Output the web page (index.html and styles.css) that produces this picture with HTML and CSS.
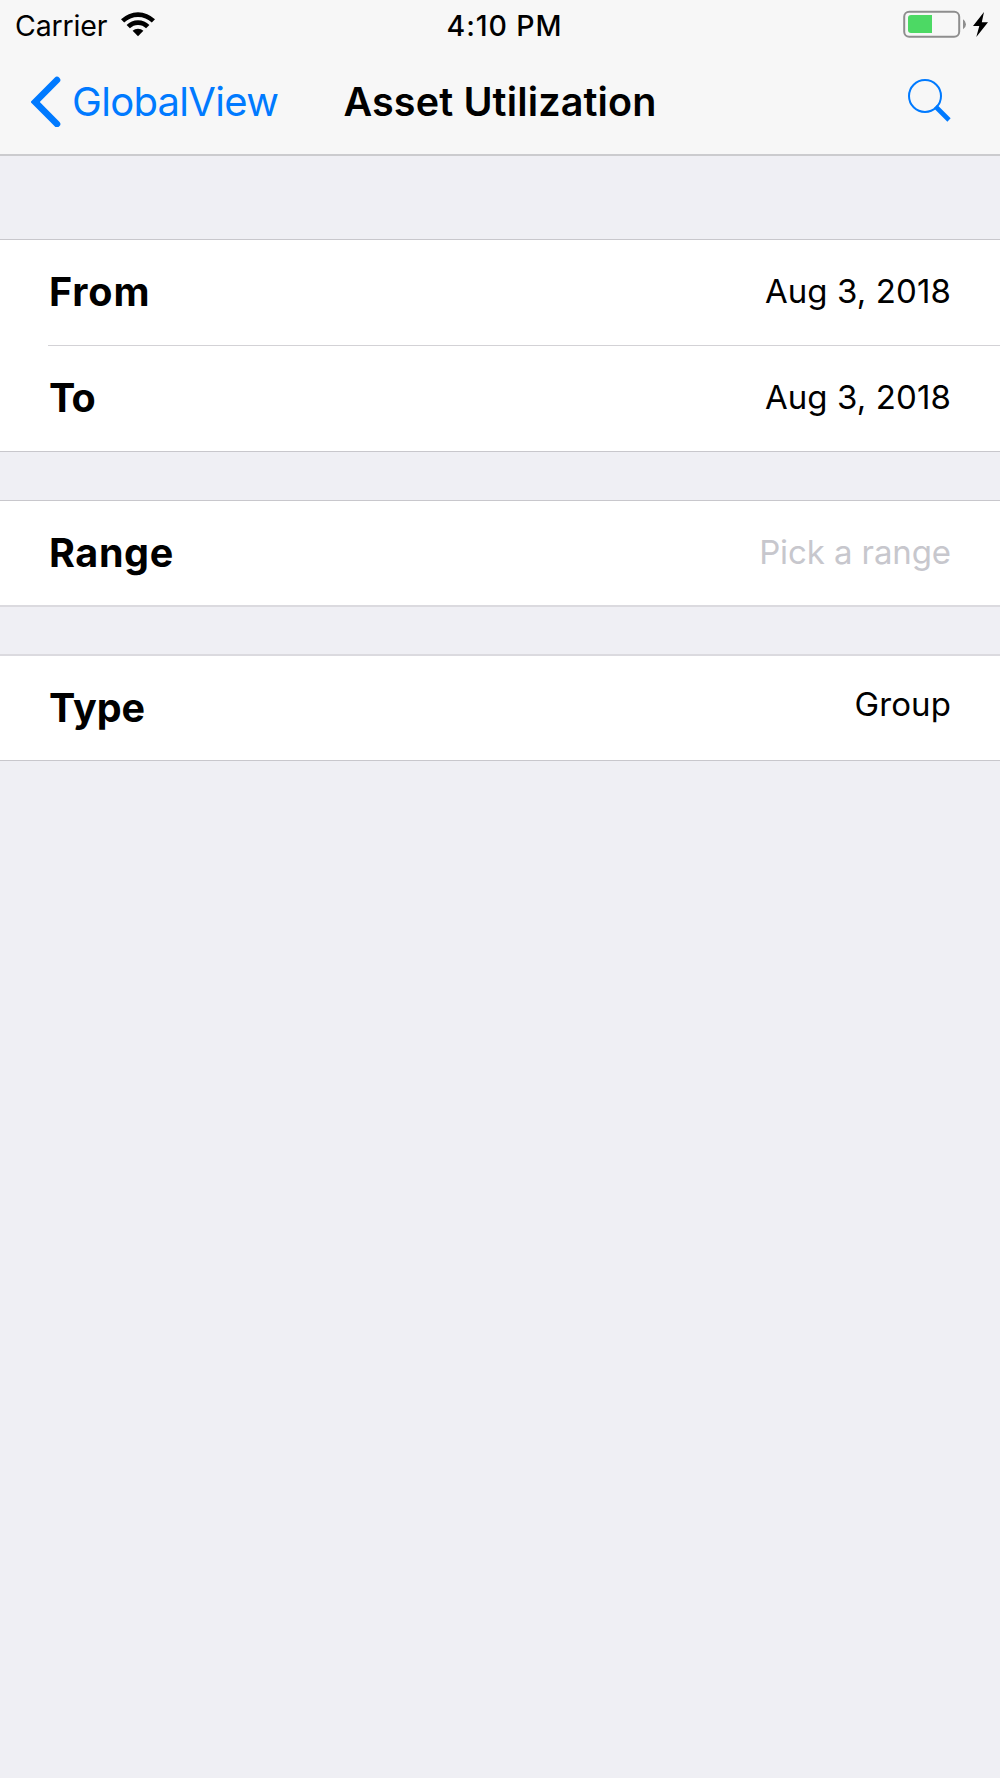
FILE: index.html
```html
<!DOCTYPE html>
<html lang="en">
<head>
  <meta charset="UTF-8" />
  <meta name="viewport" content="width=device-width, initial-scale=1.0"/>
  <title>Asset Utilization</title>
  <link rel="stylesheet" href="styles.css">
</head>
<body>
  <header class="top-bar">
    <div class="status-bar">
      <div class="status-left">
        <span class="carrier">Carrier</span>
        <svg class="wifi-icon" width="34" height="25" viewBox="0 0 34 25">
          <path d="M0 7.3 A24.2 24.2 0 0 1 34 7.3 L30.8 10.6 A19.6 19.6 0 0 0 3.2 10.6 Z"/>
          <path d="M5.6 13 A16.2 16.2 0 0 1 28.4 13 L25.1 16.3 A11.5 11.5 0 0 0 8.9 16.3 Z"/>
          <path d="M11.6 18.8 A7.8 7.8 0 0 1 22.4 18.8 L17 24.3 Z"/>
        </svg>
      </div>
      <span class="clock">4:10 PM</span>
      <div class="status-right">
        <svg width="86" height="28" viewBox="0 0 86 28">
          <rect x="1.2" y="1.8" width="55" height="25" rx="5" fill="none" stroke="#8e8e8e" stroke-width="2"/>
          <path d="M8 5 H29 V23 H8 Q5 23 5 20 V8 Q5 5 8 5 Z" fill="#4cd964"/>
          <path d="M60 9.2 Q63 11 63 14.2 Q63 17.4 60 19.2 Z" fill="#8e8e8e"/>
          <path d="M81 2 L70 16 H76.3 L73.3 27 L85 12.2 H78.8 Z"/>
        </svg>
      </div>
    </div>

    <nav class="nav-bar">
      <a class="back-button" href="#">
        <svg width="30" height="51" viewBox="0 0 30 51">
          <path d="M26 4 L4.2 26 L26 48" fill="none" stroke="#007aff" stroke-width="6.6" stroke-linecap="round"/>
        </svg>
        <span class="back-text">GlobalView</span>
      </a>
      <h1 class="nav-title">Asset Utilization</h1>
      <a class="search-button" href="#">
        <svg width="44" height="44" viewBox="0 0 44 44">
          <circle cx="17" cy="17" r="16" fill="none" stroke="#007aff" stroke-width="2"/>
          <path d="M27.5 27.5 L41 41" stroke="#007aff" stroke-width="4.6"/>
        </svg>
      </a>
    </nav>
  </header>

  <main>
    <section class="group">
      <div class="row">
        <span class="label label-from">From</span>
        <span class="value">Aug 3, 2018</span>
      </div>
      <div class="row">
        <span class="label label-to">To</span>
        <span class="value">Aug 3, 2018</span>
      </div>
    </section>

    <section class="group group-range">
      <div class="row">
        <span class="label label-range">Range</span>
        <span class="value placeholder">Pick a range</span>
      </div>
    </section>

    <section class="group group-type">
      <div class="row">
        <span class="label">Type</span>
        <span class="value type-value">Group</span>
      </div>
    </section>
  </main>
</body>
</html>
```
FILE: styles.css
```css
* {
  box-sizing: border-box;
}

body {
  margin: 0;
  min-height: 1778px;
  font-family: Inter, "Liberation Sans", sans-serif;
  background-color: #efeff4;
  color: #000;
}

svg {
  display: block;
}

.top-bar {
  height: 156px;
  background-color: #f7f7f7;
  border-bottom: 2px solid #cbcbce;
}

.status-bar {
  display: grid;
  grid-template-columns: 1fr auto 1fr;
  height: 51px;
  padding: 0 11px 0 15px;
  font-size: 28.5px;
  line-height: 51px;
}

.status-left {
  display: flex;
  gap: 14px;
}

.carrier {
  letter-spacing: -0.15px;
}

.wifi-icon {
  margin-top: 12px;
}

.clock {
  font-weight: 500;
  letter-spacing: 0.9px;
  margin-left: 5px;
}

.status-right {
  display: flex;
  justify-content: flex-end;
  padding-top: 10px;
}

.nav-bar {
  display: grid;
  grid-template-columns: 1fr auto 1fr;
  align-items: center;
  height: 101px;
  padding: 0 31px;
}

.back-button {
  display: flex;
  align-items: center;
  gap: 11px;
  font-size: 40px;
  color: #007aff;
  text-decoration: none;
}

.back-text {
  letter-spacing: -0.7px;
  padding-bottom: 1px;
}

.nav-title {
  margin: 0;
  font-size: 39.5px;
  font-weight: 600;
  letter-spacing: 0.15px;
}

.search-button {
  justify-self: end;
  margin-right: 17px;
  padding-bottom: 2px;
}

main {
  padding-top: 83px;
}

.group {
  margin-bottom: 48px;
  background-color: #fff;
  border-top: 1px solid #c8c7cc;
  border-bottom: 1px solid #c8c7cc;
}

.group-range {
  margin-bottom: 47px;
  border-bottom: 2px solid #dbdadf;
}

.group-type {
  border-top: 2px solid #dbdadf;
}

.row {
  display: flex;
  align-items: center;
  justify-content: space-between;
  height: 105px;
  margin-left: 48px;
  padding-right: 49px;
}

.row + .row {
  height: 106px;
  border-top: 1px solid #d3d2d6;
}

.group-range .row,
.group-type .row {
  height: 104px;
}

.label {
  padding-left: 1px;
  font-size: 39.5px;
  font-weight: 700;
}

.label-from {
  padding-bottom: 2px;
  letter-spacing: 0.9px;
}

.label-to {
  padding-bottom: 2px;
  letter-spacing: -0.7px;
}

.label-range {
  padding-bottom: 1px;
  letter-spacing: 0.6px;
}

.value {
  padding-bottom: 4px;
  font-size: 33px;
  letter-spacing: 0.1px;
}

.placeholder {
  padding-bottom: 3px;
  color: #c7c7cd;
  letter-spacing: -0.1px;
}

.type-value {
  padding-bottom: 8px;
}
```
